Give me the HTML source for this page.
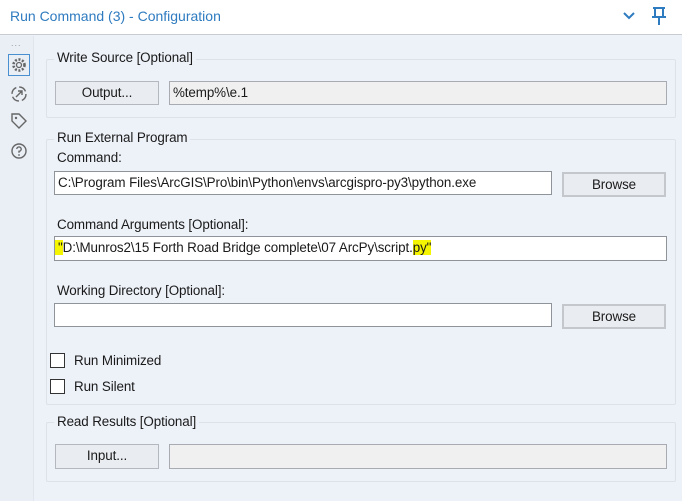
<!DOCTYPE html>
<html><head><style>
*{box-sizing:border-box;margin:0;padding:0}
body{width:682px;height:501px;overflow:hidden;background:#edf1f8;font-family:"Liberation Sans",sans-serif;font-size:13.4px;color:#1a1a1a;position:relative;letter-spacing:-0.1px}
.a{position:absolute}
.hdr{left:0;top:0;width:682px;height:35px;background:#fff;border-bottom:1px solid #c8ccd2}
.title{left:10px;top:8px;font-size:14px;color:#2e7bc0;letter-spacing:0}
.side{left:0;top:36px;width:34px;height:465px;background:#eaeef5;border-right:1px solid #e0e5ee}
.grp{border:1px solid #dde2ea;border-radius:2px}
.lg{background:#edf1f8;padding:0 3px}
.btn{background:#e9ecf0;border:1px solid #b4b8be;text-align:center;line-height:22px}
.in{background:#fff;border:1px solid #8f949a;padding-left:3px;line-height:22px;white-space:nowrap;overflow:hidden}
.gray{background:#f0f0f0;border-color:#a8acb2}
.cb{width:15px;height:15px;border:1px solid #333;background:#fff}
</style></head><body>
<div class="a hdr"></div>
<div class="a title">Run Command (3) - Configuration</div>
<svg class="a" style="left:622px;top:10px" width="14" height="12" viewBox="0 0 14 12"><path d="M2 3 L7 8 L12 3" stroke="#2e7bc0" stroke-width="2" fill="none"/></svg>
<svg class="a" style="left:650px;top:6px" width="18" height="20" viewBox="0 0 18 20"><path d="M3 2 H15 M5 2 V11 M13 2 V11 M2 11 H16 M9 11 V19" stroke="#2e7bc0" stroke-width="2" fill="none"/></svg>
<div class="a side"></div>
<div class="a" style="left:11px;top:38px;color:#999;font-size:9px;letter-spacing:1px">...</div>
<div class="a" style="left:8px;top:54px;width:22px;height:22px;border:1px solid #4a8fd0"></div>
<svg class="a" style="left:10px;top:56px" width="18" height="18" viewBox="0 0 18 18"><circle cx="9" cy="9" r="2.5" fill="none" stroke="#666" stroke-width="1.3"/><circle cx="9" cy="9" r="5.5" fill="none" stroke="#666" stroke-width="2.6" stroke-dasharray="2 1.6"/></svg>
<svg class="a" style="left:10px;top:85px" width="18" height="18" viewBox="0 0 18 18"><circle cx="9" cy="9" r="7" fill="none" stroke="#666" stroke-width="1.4" stroke-dasharray="8 3"/><path d="M6 12 L12 6 M8 6 H12 V10" stroke="#666" stroke-width="1.4" fill="none"/></svg>
<svg class="a" style="left:10px;top:112px" width="18" height="18" viewBox="0 0 18 18"><path d="M2 2 H9 L16 9 L9 16 L2 9 Z" fill="none" stroke="#666" stroke-width="1.4"/><circle cx="6" cy="6" r="1.2" fill="#666"/></svg>
<svg class="a" style="left:10px;top:142px" width="18" height="18" viewBox="0 0 18 18"><circle cx="9" cy="9" r="7" fill="none" stroke="#666" stroke-width="1.4"/><path d="M6.8 7 A2.2 2.2 0 1 1 9 9.3 V10.8" fill="none" stroke="#666" stroke-width="1.4"/><circle cx="9" cy="13" r="0.9" fill="#666"/></svg>

<div class="a grp" style="left:46px;top:59px;width:630px;height:59px"></div>
<div class="a lg" style="left:54px;top:50px">Write Source [Optional]</div>
<div class="a btn" style="left:55px;top:81px;width:104px;height:24px">Output...</div>
<div class="a in gray" style="left:169px;top:81px;width:498px;height:24px">%temp%\e.1</div>

<div class="a grp" style="left:46px;top:139px;width:630px;height:266px"></div>
<div class="a lg" style="left:54px;top:130px">Run External Program</div>
<div class="a" style="left:57px;top:150px">Command:</div>
<div class="a in" style="left:54px;top:171px;width:498px;height:24px">C:\Program Files\ArcGIS\Pro\bin\Python\envs\arcgispro-py3\python.exe</div>
<div class="a btn" style="left:562px;top:172px;width:104px;height:25px;border-width:2px;border-color:#c4c8cd">Browse</div>
<div class="a" style="left:57px;top:217px">Command Arguments [Optional]:</div>
<div class="a in" style="left:54px;top:236px;width:613px;height:25px"><span style="background:#f5f500;padding-left:3px;margin-left:-3px">"</span>D:\Munros2\15 Forth Road Bridge complete\07 ArcPy\script.<span style="background:#f5f500">py"</span></div>
<div class="a" style="left:57px;top:283px">Working Directory [Optional]:</div>
<div class="a in" style="left:54px;top:303px;width:498px;height:24px"></div>
<div class="a btn" style="left:562px;top:304px;width:104px;height:25px;border-width:2px;border-color:#c4c8cd">Browse</div>
<div class="a cb" style="left:50px;top:353px"></div>
<div class="a" style="left:74px;top:353px">Run Minimized</div>
<div class="a cb" style="left:50px;top:379px"></div>
<div class="a" style="left:74px;top:379px">Run Silent</div>

<div class="a grp" style="left:46px;top:422px;width:630px;height:60px"></div>
<div class="a lg" style="left:54px;top:414px">Read Results [Optional]</div>
<div class="a btn" style="left:55px;top:444px;width:104px;height:25px">Input...</div>
<div class="a in gray" style="left:169px;top:444px;width:498px;height:25px"></div>
</body></html>
